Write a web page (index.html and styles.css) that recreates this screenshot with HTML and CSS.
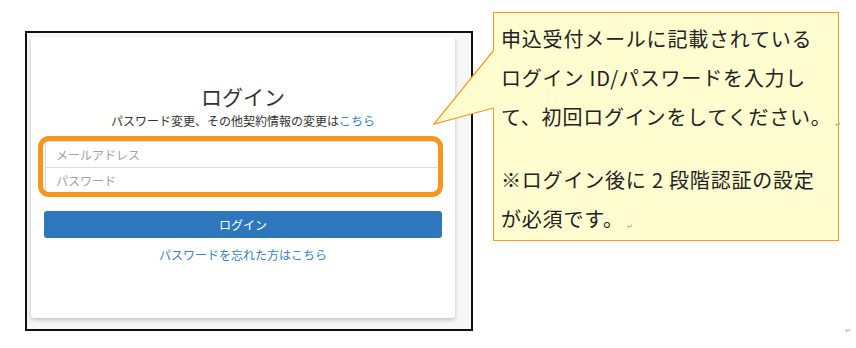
FILE: index.html
```html
<!DOCTYPE html>
<html lang="ja">
<head>
    <meta charset="UTF-8">
    <meta name="viewport" content="width=device-width, initial-scale=1.0">
    <title>ログイン手順</title>
    <link rel="stylesheet" href="styles.css">
</head>
<body>
    <div class="page">
        <div class="shot">
            <div class="card">
                <h1>ログイン</h1>
                <p class="sub">パスワード変更、その他契約情報の変更は<a href="#">こちら</a></p>
                <div class="fields">
                    <input type="email" placeholder="メールアドレス">
                    <input type="password" placeholder="パスワード">
                </div>
                <button type="button" class="login-btn">ログイン</button>
                <p class="forgot"><a href="#">パスワードを忘れた方はこちら</a></p>
                <div class="highlight"></div>
            </div>
        </div>

        <div class="callout">
            <p>申込受付メールに記載されている<br>ログイン ID/パスワードを入力し<br>て、初回ログインをしてください。<span class="mark">↵</span></p>
            <p class="note">※ログイン後に 2 段階認証の設定<br>が必須です。<span class="mark">↵</span></p>
            <svg class="pointer" width="62" height="76" viewBox="0 0 62 76">
                <polygon points="61,0 1,74 61,58" fill="#fffdd0"/>
                <polyline points="60.5,0.5 1,74 60.5,58" fill="none" stroke="#f59a23" stroke-width="1.2"/>
            </svg>
        </div>

        <span class="mark corner">↵</span>
    </div>
</body>
</html>
```

FILE: styles.css
```css
body {
    margin: 0;
    background: #fff;
    font-family: "Noto Sans CJK JP", "Noto Sans", sans-serif;
}
.page {
    position: relative;
    width: 856px;
    height: 348px;
    padding: 31px 0 0 25px;
    box-sizing: border-box;
}
.shot {
    width: 448px;
    height: 300px;
    border: 2px solid #111;
    box-sizing: border-box;
    background: #f7f7f7;
    padding: 4px 0 0 4px;
}
.card {
    position: relative;
    width: 424px;
    height: 281px;
    box-sizing: border-box;
    background: #fff;
    border-radius: 3px;
    box-shadow: 0 2px 4px rgba(0,0,0,0.22);
    padding: 47px 13px 0;
    text-align: center;
    color: #333;
}
h1 {
    margin: 0;
    font-size: 21px;
    line-height: 24px;
    font-weight: normal;
}
.sub {
    margin: 6px 0 0;
    font-size: 12px;
    line-height: 14px;
}
a {
    color: #3a7fc1;
    text-decoration: none;
}
.fields {
    margin-top: 13px;
    display: flex;
    flex-direction: column;
}
.fields input {
    height: 27px;
    margin: 0 1px;
    padding: 0 10px;
    border: 1px solid #ddd;
    box-sizing: border-box;
    font-family: inherit;
    font-size: 12px;
    color: #555;
    background: #fff;
}
.fields input + input {
    margin-top: -1px;
}
.fields input::placeholder {
    color: #a3a3a3;
}
.login-btn {
    display: block;
    width: 100%;
    height: 27px;
    margin-top: 17px;
    border: none;
    border-radius: 3px;
    background: #2e77bc;
    color: #fff;
    font-family: inherit;
    font-size: 12px;
}
.forgot {
    margin: 10px 0 0;
    font-size: 12px;
    line-height: 14px;
}
.highlight {
    position: absolute;
    left: 7px;
    top: 99px;
    width: 405px;
    height: 61px;
    box-sizing: border-box;
    border: 5px solid #f7961e;
    border-radius: 11px;
}
.callout {
    position: absolute;
    left: 493px;
    top: 12px;
    width: 346px;
    height: 229px;
    box-sizing: border-box;
    background: #fffdd0;
    border: 1px solid #f59a23;
    padding: 6px 0 0 7px;
    color: #222;
}
.callout p {
    margin: 0;
    font-size: 20px;
    line-height: 39px;
    letter-spacing: 0.8px;
    white-space: nowrap;
}
.callout .note {
    margin-top: 16px;
}
.pointer {
    position: absolute;
    left: -61px;
    top: 37px;
}
.mark {
    font-size: 7px;
    color: #999;
    letter-spacing: 0;
    vertical-align: -2px;
    margin-left: 3px;
}
.corner {
    position: absolute;
    left: 842px;
    top: 325px;
}
```
